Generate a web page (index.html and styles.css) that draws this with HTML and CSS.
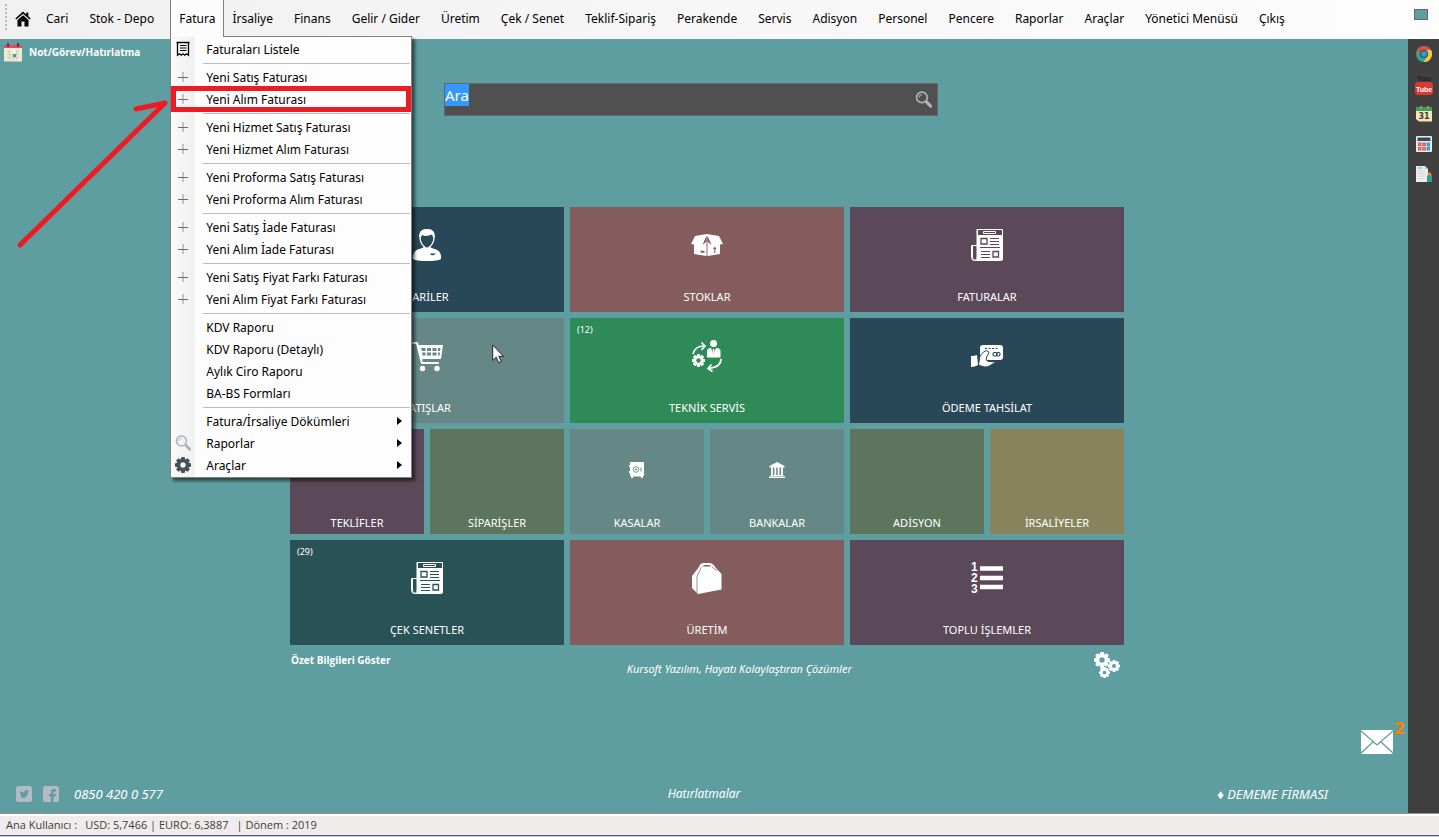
FILE: index.html
```html
<!DOCTYPE html>
<html lang="tr">
<head>
<meta charset="utf-8">
<title>Kursoft</title>
<link rel="stylesheet" href="styles.css">
</head>
<body>
<svg class="defs" aria-hidden="true">
  <symbol id="plus" viewBox="0 0 16 16"><path d="M8 3v10" stroke="#c4c4c4" stroke-width="2"/><path d="M3 8.500h10" stroke="#6a6a6a" stroke-width="1"/></symbol>
  <symbol id="lens" viewBox="0 0 16 16"><circle cx="6.500" cy="6" r="5" fill="none" stroke="#aab4bd" stroke-width="1.600"/><path d="M4 6a2.500 2.500 0 0 1 2.500-2.500" fill="none" stroke="#aab4bd"/><path d="M11 10.500l3.700 3.700" stroke="#aab4bd" stroke-width="3" stroke-linecap="round"/></symbol>
  <symbol id="gear" viewBox="-8 -8 16 16">
    <g fill="currentColor"><circle r="6.200"/><rect x="-2" y="-8" width="4" height="16" rx="1"/><rect x="-2" y="-8" width="4" height="16" rx="1" transform="rotate(45)"/><rect x="-2" y="-8" width="4" height="16" rx="1" transform="rotate(90)"/><rect x="-2" y="-8" width="4" height="16" rx="1" transform="rotate(135)"/></g>
    <circle r="2.700" class="hole"/>
  </symbol>
  <symbol id="news" viewBox="0 0 32 32">
    <path d="M6.500.500h25v29q0 2-2 2H3.500q-3 0-3-3V16.500h6z" fill="none" stroke="#fff"/>
    <path d="M6 6h26v23q0 3-3 3H4q2-1 2-3z" fill="#fff"/>
    <path d="M1.500 16v12q0 3 2.500 3.500M4.500 31q1.500-1 1.500-3V0" fill="none" stroke="#fff"/>
    <path d="M12.500 2.500h12v2h-12z" fill="none" stroke="#fff"/>
    <path d="M10 9.500h6v5.500h-6zM22 22.500h5.500V28H22z" fill="#fff" stroke="currentColor" stroke-width="1.300"/>
    <path d="M19 9.500h9M19 12.500h9M19 15.500h9M9 18.500h20M10 22.500h9M10 25.500h9M10 28.500h9" stroke="currentColor"/>
  </symbol>
</svg>

<header class="menubar">
  <nav class="menus" aria-label="Ana menü">
    <span class="grip"></span>
    <button class="home" aria-label="Ana sayfa"><svg viewBox="0 0 16 16" width="16" height="16"><path d="M8 .500L.300 7.500l1 1.100L8 2.700l6.700 5.900 1-1.100-2.400-2.200V1.500h-2v2z"/><path d="M8 4.300L2.500 9.100V15.500h4v-5h3v5h4V9.100z"/></svg></button>
    <button>Cari</button>
    <button>Stok - Depo</button>
    <div class="open-menu">
      <button class="open" aria-expanded="true">Fatura</button>
      <div class="dropdown">
        <button><svg viewBox="0 0 16 16"><path d="M1.500 1.500h13M2.500 1.500v12.700l2-1.400 1.800 1.400 1.700-1.400 1.700 1.400 1.800-1.400 2 1.400V1.500" fill="none" stroke="#000" stroke-width="1.300"/><path d="M5 4.500h6.500M5 7h6.500M5 9.500h6.500" stroke="#000" stroke-width="1.200"/></svg>Faturaları Listele</button>
        <hr>
        <button><svg><use href="#plus"/></svg>Yeni Satış Faturası</button>
        <button class="marked"><svg><use href="#plus"/></svg>Yeni Alım Faturası</button>
        <hr>
        <button><svg><use href="#plus"/></svg>Yeni Hizmet Satış Faturası</button>
        <button><svg><use href="#plus"/></svg>Yeni Hizmet Alım Faturası</button>
        <hr>
        <button><svg><use href="#plus"/></svg>Yeni Proforma Satış Faturası</button>
        <button><svg><use href="#plus"/></svg>Yeni Proforma Alım Faturası</button>
        <hr>
        <button><svg><use href="#plus"/></svg>Yeni Satış İade Faturası</button>
        <button><svg><use href="#plus"/></svg>Yeni Alım İade Faturası</button>
        <hr>
        <button><svg><use href="#plus"/></svg>Yeni Satış Fiyat Farkı Faturası</button>
        <button><svg><use href="#plus"/></svg>Yeni Alım Fiyat Farkı Faturası</button>
        <hr>
        <button><svg></svg>KDV Raporu</button>
        <button><svg></svg>KDV Raporu (Detaylı)</button>
        <button><svg></svg>Aylık Ciro Raporu</button>
        <button><svg></svg>BA-BS Formları</button>
        <hr>
        <button class="sub"><svg></svg>Fatura/İrsaliye Dökümleri</button>
        <button class="sub"><svg><use href="#lens"/></svg>Raporlar</button>
        <button class="sub slate"><svg><use href="#gear"/></svg>Araçlar</button>
      </div>
    </div>
    <button>İrsaliye</button>
    <button>Finans</button>
    <button>Gelir / Gider</button>
    <button>Üretim</button>
    <button>Çek / Senet</button>
    <button>Teklif-Sipariş</button>
    <button>Perakende</button>
    <button>Servis</button>
    <button>Adisyon</button>
    <button>Personel</button>
    <button>Pencere</button>
    <button>Raporlar</button>
    <button>Araçlar</button>
    <button>Yönetici Menüsü</button>
    <button>Çıkış</button>
  </nav>
  <button class="swatch" aria-label="Tema rengi"></button>
</header>

<div class="workspace">
  <main>
    <a class="note" href="#not">
      <svg viewBox="0 0 18 19" width="18" height="19"><path d="M0 2h18v4H0z" fill="#f0485a"/><path d="M0 5h18v13.500H0z" fill="#efe9d6"/><path d="M3 0h2v4H3zM13 0h2v4h-2z" fill="#33475b"/><path d="M3 8.500h12M3 11.500h12M3 14.500h12M5.500 7v10M9 7v10M12.500 7v10" stroke="#cfc8b4" stroke-width=".8"/><path d="M7 9q3-3 4 0l-2 2" fill="none" stroke="#fff" stroke-width="1.500"/><path d="M9 11h3v3H9z" fill="#3f9f8f"/></svg>
      Not/Görev/Hatırlatma
    </a>

    <section class="dashboard">
      <div class="search">
        <input id="q" type="text" value="Ara" aria-label="Ara">
        <button aria-label="Aramayı başlat"><svg width="17" height="17"><use href="#lens"/></svg></button>
      </div>

      <div class="tiles">
        <button class="tile navy"><svg viewBox="0 0 32 32"><path d="M2 30Q1 21 10 19.500l3-1.500h6l3 1.500q9 1.500 8 10.500-3 2-14 2T2 30z" fill="#fff"/><path d="M9 8q0-7 7-7t7 7q0 8-7 11.500Q9 16 9 8z" fill="currentColor" stroke="#fff" stroke-width="1.300"/><path d="M8.500 9Q7 0 16 0t7.500 9q-1.500 0-2.500-3.500Q15 8 11.500 6q-1 1-3 3z" fill="#fff"/><path d="M19 24.500h6q-2 2.500-5 1.500z" fill="currentColor"/></svg><span>CARİLER</span></button>
        <button class="tile rose"><svg viewBox="0 0 32 32"><path d="M3 14l12.500-1v14L3 25zM16.500 13L29 14v11l-12.500 2z" fill="#fff"/><path d="M4 7l12-2 12 2 4 8-11 1.500L16 7l-5 9.500L0 15z" fill="#fff"/><path d="M16 8v19" stroke="#cbb9ba"/><path d="M15.500 7L11.500 16l3.500-3zM16.500 7l4 9-3.500-3z" fill="currentColor"/><path d="M9.500 21.500l4 .500v2l-4-.500zM22 20l1.800-2.500L25.500 20h-1.200v4h-1.100v-4z" fill="currentColor"/></svg><span>STOKLAR</span></button>
        <button class="tile plum"><svg><use href="#news"/></svg><span>FATURALAR</span></button>

        <button class="tile sage"><svg viewBox="0 0 32 32"><path d="M1 3h5l5 20h16" fill="none" stroke="#fff" stroke-width="2.200" stroke-linecap="round" stroke-linejoin="round"/><path d="M6 5h26l-2 14H10z" fill="#fff"/><path d="M11 20.500h18" stroke="currentColor" stroke-width=".6"/><circle cx="11.500" cy="28.500" r="2.700" fill="#fff"/><circle cx="26" cy="28.500" r="2.700" fill="#fff"/><path d="M10 8h4.500v3H11zM16 8h4v3h-4zM21.500 8h4v3h-4zM27 8h2.500l-.5 3h-2zM11 12.500h3.500v3h-3zM16 12.500h4v3h-4zM21.500 12.500h4v3h-4zM27 12.500h2l-.5 3H27z" fill="currentColor"/></svg><span>SATIŞLAR</span></button>
        <button class="tile green"><small>(12)</small><svg viewBox="0 0 32 32"><circle cx="22.500" cy="3.500" r="3.500" fill="#fff"/><path d="M16 17.500V11q0-3 4-3l2.500 6L25 8q4.500 0 4.500 3v6.500z" fill="#fff"/><path d="M22.500 8.500l1 1.500-1 4-1-4z" fill="#fff"/><path d="M2 14q2-8 11-8M10.500 2.500L14 6l-3.500 4M30 19q0 8-12 9.500M20.500 24.500L17 28.500l4.500 3" fill="none" stroke="#fff" stroke-width="1.700"/><use href="#gear" x="1" y="14" width="13" height="13" color="#fff"/></svg><span>TEKNİK SERVİS</span></button>
        <button class="tile navy"><svg viewBox="0 0 32 32"><rect x="9" y="5" width="23" height="15" rx="3" fill="#fff"/><path d="M14 8.500h14" stroke="currentColor" stroke-dasharray="2 1.500"/><path d="M0 16q4 0 6-1l1 10q-3 2-7 2z" fill="#fff"/><path d="M7.500 25L9 16l4-4.500q3-2 5 .5 0 2-2.500 5-1 3.500 1.500 4.500l8 .500-5 3q-3 2.500-7 2z" fill="#fff" stroke="currentColor"/><rect x="22" y="12.500" width="4" height="3.500" rx="1.500" fill="none" stroke="currentColor" stroke-width="1.200"/><rect x="25.500" y="12.500" width="3.500" height="3.500" rx="1.500" fill="none" stroke="currentColor" stroke-width="1.200"/></svg><span>ÖDEME TAHSİLAT</span></button>

        <button class="tile half plum"><span>TEKLİFLER</span></button>
        <button class="tile half moss"><span>SİPARİŞLER</span></button>
        <button class="tile half sage"><svg viewBox="0 0 16 16"><path d="M1 0h14v14h-1v2h-2v-1.500H4V16H2v-2H1v-3H0V9h1V5H0V3h1z" fill="#fff"/><circle cx="7" cy="7.500" r="2.800" fill="none" stroke="currentColor" stroke-width=".9"/><circle cx="7" cy="7.500" r="1" fill="currentColor"/><path d="M12 5.500v4" stroke="currentColor"/></svg><span>KASALAR</span></button>
        <button class="tile half sage"><svg viewBox="0 0 16 16"><path d="M8 0l7.500 4v1.500H.500V4zM0 14.500h16V16H0zM1.500 13h13v1h-13z" fill="#fff"/><path d="M3 5v9M6.300 5v9M9.600 5v9M13 5v9" stroke="#fff" stroke-width="1.800"/></svg><span>BANKALAR</span></button>
        <button class="tile half moss"><span>ADİSYON</span></button>
        <button class="tile half khaki"><span>İRSALİYELER</span></button>

        <button class="tile petrol"><small>(29)</small><svg><use href="#news"/></svg><span>ÇEK SENETLER</span></button>
        <button class="tile rose"><svg viewBox="0 0 32 32"><path d="M1 14L8 5q1-4 5-4h5q4 0 6 4l6.500 7v15.500L7 32 1 26z" fill="#fff"/><path d="M11.500 4.500q.500-1.500 2.500-1.500h3.500q2 0 3 1.500z" fill="currentColor"/><path d="M10.500 5L6 14.500V31M21 5l5 4" fill="none" stroke="currentColor" stroke-width=".7"/></svg><span>ÜRETİM</span></button>
        <button class="tile plum"><svg viewBox="0 0 32 32"><path d="M9 6.500h23M9 16h23M9 25h23" stroke="#fff" stroke-width="4.500"/><g class="digits"><text x="0" y="9">1</text><text x="0" y="20">2</text><text x="0" y="31">3</text></g></svg><span>TOPLU İŞLEMLER</span></button>
      </div>

      <div class="below">
        <a class="summary" href="#ozet">Özet Bilgileri Göster</a>
        <em>Kursoft Yazılım, Hayatı Kolaylaştıran Çözümler</em>
        <button class="settings" aria-label="Ayarlar"><svg viewBox="0 0 26 26" width="26" height="26"><use href="#gear" width="16" height="16"/><use href="#gear" x="14" y="8" width="12" height="12"/><use href="#gear" x="5" y="15" width="11" height="11"/></svg></button>
      </div>
    </section>

    <div class="inbox">
      <button class="mail" aria-label="Mesajlar"><svg viewBox="0 0 32 24" width="32" height="24"><rect width="32" height="24" rx="1" fill="#fff"/><path d="M0 1l16 14L32 1M0 23l12-11M32 23L20 12" fill="none" stroke="currentColor" stroke-width="1.300"/></svg><b>2</b></button>
    </div>

    <footer class="contact">
      <div class="social">
        <a href="#twitter" aria-label="Twitter"><svg viewBox="0 0 16 16" width="16" height="16"><rect width="16" height="16" rx="2.500" fill="#b3bcc6"/><path d="M4 4.500q1.500 2 4 2Q8 4 10 4q1 0 1.500.600l1.200-.400-.600 1.200.9-.200-1 1.100q0 5.200-5 5.700-2 0-3.300-1 1.700 0 2.600-.800-1.300-.200-1.600-1.300h.7Q4.200 8.300 4 7l.6.200Q3.500 6 4 4.500z" fill="currentColor"/></svg></a>
        <a href="#facebook" aria-label="Facebook"><svg viewBox="0 0 16 16" width="16" height="16"><rect width="16" height="16" rx="2.500" fill="#b3bcc6"/><path d="M8 16v-5.500H6V8h2V6q0-3 3-3h2v2.400h-1.500q-1 0-1 1V8H13l-.4 2.500h-2.100V16z" fill="currentColor"/></svg></a>
        <em>0850 420 0 577</em>
      </div>
      <a href="#hatirlatmalar"><em>Hatırlatmalar</em></a>
      <em class="firm">♦ DEMEME FİRMASI</em>
    </footer>
  </main>

  <aside class="tools" aria-label="Kısayollar">
    <button aria-label="Chrome"><svg viewBox="0 0 16 16" width="16" height="16"><circle cx="8" cy="8" r="8" fill="#2fa58c"/><path d="M1.100 4A8 8 0 0 1 15 4H8L4.500 10z" fill="#e04f43"/><path d="M15 4A8 8 0 0 1 7.500 16L11.500 9.500 10 4z" fill="#f5c443"/><circle cx="8" cy="8" r="4" fill="#404040"/><circle cx="8" cy="8" r="3" fill="#2d9cd0"/></svg></button>
    <button aria-label="YouTube"><svg viewBox="0 0 18 22" width="18" height="22"><text x="9" y="8" class="you">You</text><rect y="9" width="18" height="13" rx="3" fill="#d9392f"/><text x="9" y="19" class="tube">Tube</text></svg></button>
    <button aria-label="Takvim"><svg viewBox="0 0 16 16" width="16" height="16"><path d="M0 3h16v12.500H3L0 13z" fill="#f3e6b4"/><path d="M0 1h16v4H0z" fill="#2aa765"/><path d="M4 0h2v3H4zM11 0h2v3h-2z" fill="#e8763a"/><text x="8" y="13" class="date">31</text></svg></button>
    <button aria-label="Hesap makinesi"><svg viewBox="0 0 16 16" width="16" height="16"><rect width="16" height="16" rx="1" fill="#e9edf2"/><path d="M1.500 1.500h13v3.500h-13z" fill="#2f4a5e"/><path d="M2 6.500h3.500V10H2zM6.300 6.500h3.500V10H6.300zM2 11h3.500v3.500H2zM6.300 11h3.500v3.500H6.300z" fill="#e0493e"/><path d="M10.600 6.500H14v8h-3.400z" fill="#3ba0cf"/><path d="M3 8.200h1.500M7.300 8.200h1.500M3 12.700h1.500M7.300 12.700h1.500M11.500 10.500h1.500" stroke="#fff" stroke-width=".7"/></svg></button>
    <button aria-label="Not defteri"><svg viewBox="0 0 16 16" width="16" height="16"><path d="M0 0h9l3 3v13H0z" fill="#eceeef"/><path d="M9 0v3h3z" fill="#b9c2c7"/><path d="M1.500 2h5" stroke="#57b5a4"/><path d="M1.500 5h8M1.500 7.500h8M1.500 10h8M1.500 12.500h8" stroke="#c9cfd2" stroke-width=".8"/><path d="M11 9.500h5V16h-5z" fill="#2f9e8e"/><path d="M11 9.500L13.500 5 16 9.500z" fill="#f0913c"/><path d="M12.800 6.500L13.500 5l.7 1.500z" fill="#2c3f4f"/></svg></button>
  </aside>
</div>

<footer class="status">
  <span>Ana Kullanıcı :</span>
  <span>USD: 5,7466 | EURO: 6,3887</span>
  <span>| Dönem : 2019</span>
</footer>

<svg class="pointer-arrow" viewBox="0 0 160 160" aria-hidden="true"><path d="M10 155L155 13M126 19l29-6" fill="none" stroke="#ed1c24" stroke-width="5" stroke-linecap="round" stroke-linejoin="round"/></svg>
<svg class="cursor" viewBox="0 0 13 20" aria-hidden="true"><path d="M.700 1v15.500l3.500-3.300 2.600 5.600 2.500-1.200-2.500-5.300h4.700z" fill="#fff" stroke="#222"/></svg>
<script src="app.js"></script>
</body>
</html>
```
FILE: styles.css
```css
* { box-sizing: border-box; }

body {
  margin: 0;
  min-height: 100vh;
  display: flex;
  flex-direction: column;
  background: #5f9ea0;
  font: 12px/16px "Noto Sans", "Open Sans", sans-serif;
  color: #000;
}

button {
  border: 0;
  padding: 0;
  background: none;
  font: inherit;
  color: inherit;
}

a { color: inherit; text-decoration: none; }
svg { display: block; flex: none; }
.defs { position: absolute; width: 0; height: 0; }
.hole { fill: var(--under, #5f9ea0); }

/* Menu bar */
.menubar {
  height: 39px;
  display: flex;
  justify-content: space-between;
  background: linear-gradient(90deg, #f0f0f0, #fdfdfd);
}
.menus { display: flex; gap: 1px; height: 37px; }
.menus > button, .open { padding: 0 10px; height: 37px; white-space: nowrap; }
.grip {
  width: 2px;
  margin: 4px 0 6px 5px;
  background: repeating-linear-gradient(#b8b8b8 0 2px, transparent 2px 4px);
}
.menus > .home { padding: 0 4px 0 7px; }
.swatch {
  width: 14px;
  height: 11px;
  margin: 9px 11px 0 0;
  border: 1px solid #666;
  background: #5f9ea0;
}
.open-menu { position: relative; z-index: 2; margin: 0 -3px 0 5px; }
.open-menu > .open {
  position: relative;
  z-index: 1;
  padding: 0 8px;
  background: #fcfcfc;
  border: solid #808080;
  border-width: 0 1px;
}
.dropdown {
  position: absolute;
  top: 36px;
  left: 0;
  width: 242px;
  padding: 1px;
  border: 1px solid #808080;
  background: linear-gradient(90deg, #fcfcfc 2px, #f8f8f8 2px, #f0f0f0 24px, #fdfdfd 24px);
  box-shadow: 3px 3px 3px rgba(0, 0, 0, .55);
}
.dropdown button {
  display: flex;
  align-items: flex-start;
  gap: 15px;
  width: 100%;
  height: 22px;
  padding-left: 3px;
  line-height: 24px;
  text-align: left;
  position: relative;
}
.dropdown svg { width: 16px; height: 16px; margin-top: 3px; }
.dropdown hr {
  height: 1px;
  margin: 3px 0 2px 31px;
  border: 0;
  background: #bdbdbd;
}
.dropdown .sub::after {
  content: "";
  margin: 7px 8px 0 auto;
  border: solid transparent;
  border-width: 4px 0 4px 5px;
  border-left-color: #000;
}
.slate svg { color: #465059; --under: #f3f3f3; }
.marked::after {
  content: "";
  position: absolute;
  inset: -2px -1px;
  border: 5px solid #ed1c24;
}

/* Workspace */
.workspace { flex: 1; display: flex; }
main {
  flex: 1;
  display: flex;
  flex-direction: column;
  color: #fff;
}
.note {
  display: flex;
  align-items: center;
  gap: 7px;
  height: 26px;
  padding-left: 4px;
}
.note, .summary { font-family: "Open Sans", sans-serif; font-size: 10px; font-weight: 700; }
.dashboard {
  width: 100%;
  max-width: 834px;
  margin: 18px auto 0;
  position: relative;
  left: 3px;
}
.search {
  display: flex;
  width: 494px;
  height: 33px;
  margin-left: 154px;
  border: 1px solid #666;
  background: #505050;
}
.search input {
  flex: 1;
  min-width: 0;
  height: 22px;
  padding: 0;
  border: 0;
  outline: 0;
  background: none;
  color: #fff;
  font: 15px/22px "Noto Sans", sans-serif;
}
.search input::selection { background: #3399ff; color: #fff; }
.search button { display: grid; place-items: center; width: 27px; }

.tiles {
  display: grid;
  grid-template-columns: repeat(6, 1fr);
  grid-auto-rows: 105px;
  gap: 6px;
  margin-top: 91px;
  font-size: 11px;
}
.tile {
  grid-column: span 2;
  display: flex;
  flex-direction: column;
  align-items: center;
  justify-content: space-between;
  position: relative;
  padding: 22px 0 7px;
  background: var(--under);
}
.tile.half { grid-column: span 1; padding: 33px 0 3px; }
.tile svg { width: 32px; height: 32px; color: var(--under); overflow: visible; }
.tile.half svg { width: 16px; height: 16px; }
.tile span { color: #fff; margin-top: auto; }
.tile small {
  position: absolute;
  top: 4px;
  left: 7px;
  font-size: 9px;
  color: #fff;
}
.navy { --under: #294857; }
.rose { --under: #845c5e; }
.plum { --under: #5b4858; }
.sage { --under: #658886; }
.green { --under: #2e8b57; }
.moss { --under: #5c755c; }
.khaki { --under: #87845d; }
.petrol { --under: #295257; }
.digits { fill: #fff; font: 700 12px "Liberation Sans", sans-serif; }

.below {
  display: flex;
  justify-content: space-between;
  padding: 7px 0 0 1px;
  font-size: 11px;
}
.below em { padding-top: 9px; }
.settings { padding: 0 4px 0 6px; color: #fff; }

.inbox {
  display: flex;
  justify-content: flex-end;
  margin-top: auto;
  padding: 0 15px 20px 0;
}
.mail { position: relative; color: #5f9ea0; }
.mail b {
  position: absolute;
  top: -9px;
  left: 33px;
  font: 700 16px/16px "DejaVu Sans", sans-serif;
  color: #ff8000;
}

.contact {
  display: grid;
  grid-template-columns: 1fr auto 1fr;
  align-items: center;
  height: 39px;
  padding: 0 16px;
}
.social { display: flex; align-items: center; gap: 11px; }
.social a { color: #5f9ea0; }
.social em { margin-left: 4px; }
.social em, .firm { font-size: 13px; }
.firm { justify-self: end; margin-right: 64px; }

.tools {
  width: 31px;
  display: flex;
  flex-direction: column;
  background: #404040;
}
.tools button {
  height: 30px;
  display: flex;
  align-items: center;
  justify-content: center;
}
.you, .tube { font: 700 8px "Liberation Sans", sans-serif; text-anchor: middle; fill: #222; }
.tube { fill: #fff; font-size: 7px; }
.date { font: 700 8px "DejaVu Sans", sans-serif; text-anchor: middle; fill: #3d3d33; }

/* Status bar */
.status {
  display: flex;
  gap: 8px;
  height: 24px;
  padding: 3px 6px 0;
  border-top: 1px solid #9a9090;
  border-bottom: 1px solid #b9cbdc;
  background: #f0eceb;
  box-shadow: inset 0 2px #fff, inset 0 -1px #56606c;
  font-family: "Open Sans", sans-serif;
  font-size: 11px;
  color: #3c3c3c;
}

/* Annotation and cursor drawn over the page */
.pointer-arrow {
  position: absolute;
  z-index: 3;
  left: 10px;
  top: 90px;
  width: 160px;
  height: 160px;
  pointer-events: none;
}
.cursor {
  position: absolute;
  left: 492px;
  top: 344px;
  width: 13px;
  height: 20px;
  pointer-events: none;
}
```
FILE: app.js
```javascript
const search = document.getElementById("q");
search.focus();
search.select();
```
